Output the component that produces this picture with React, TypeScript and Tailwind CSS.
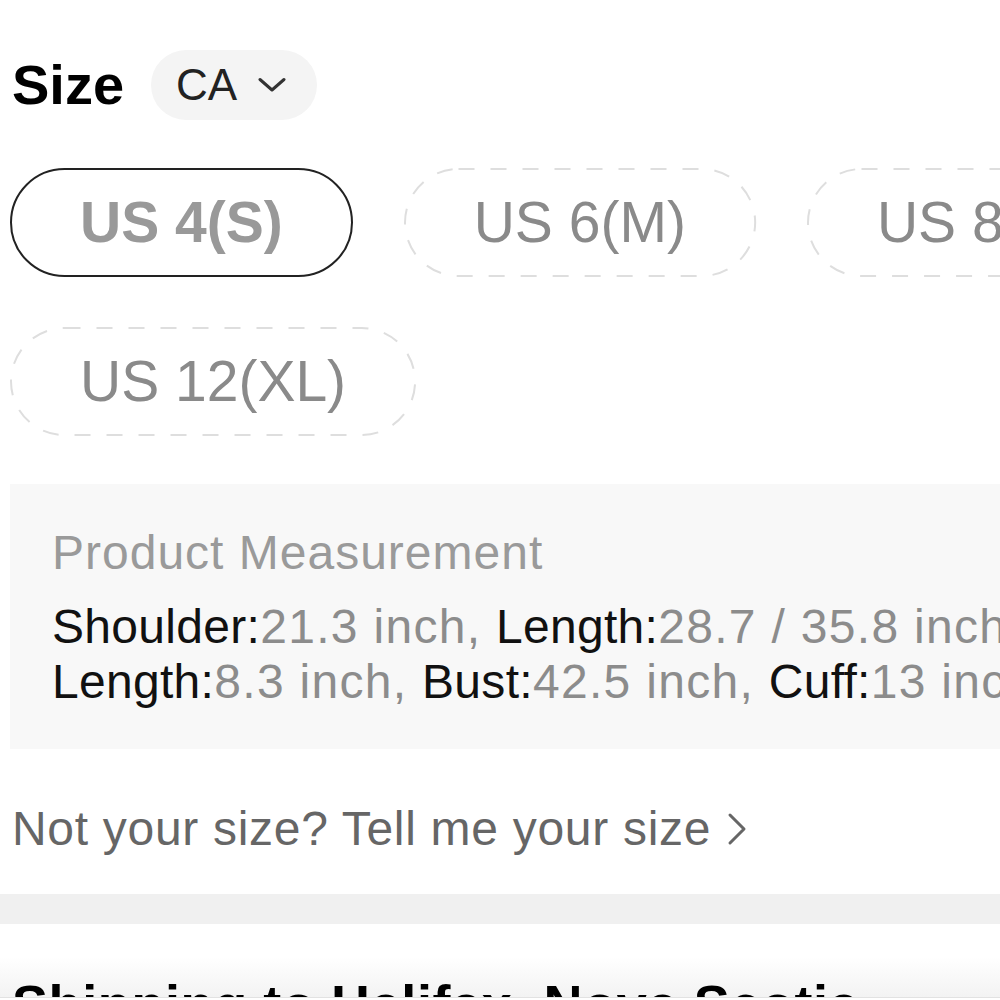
import React from "react";

const sizes = [
  { label: "US 4(S)", selected: true },
  { label: "US 6(M)", selected: false },
  { label: "US 8(L)", selected: false },
  { label: "US 12(XL)", selected: false },
];

const row1: [string, string][] = [
  ["Shoulder:", "21.3 inch, "],
  ["Length:", "28.7 / 35.8 inch, "],
  ["Sleeve", ""],
];

const row2: [string, string][] = [
  ["Length:", "8.3 inch, "],
  ["Bust:", "42.5 inch, "],
  ["Cuff:", "13 inch"],
];

function SizePill({ label, selected }: { label: string; selected: boolean }) {
  if (selected) {
    return (
      <div className="flex h-[109px] items-center rounded-full border-[2.5px] border-[#222] px-[68px] text-[57px] font-bold text-[#999]">
        {label}
      </div>
    );
  }
  return (
    <div className="relative flex h-[109px] items-center rounded-full px-[70px] text-[57px] text-[#8a8a8a]">
      <svg className="absolute inset-0 h-full w-full overflow-visible" aria-hidden>
        <rect
          x="1"
          y="1"
          rx="53.5"
          style={{ width: "calc(100% - 2px)", height: "calc(100% - 2px)" }}
          fill="none"
          stroke="#dedede"
          strokeWidth="2"
          strokeDasharray="16 16"
        />
      </svg>
      <span className="relative">{label}</span>
    </div>
  );
}

function MeasureLine({ parts }: { parts: [string, string][] }) {
  return (
    <div className="whitespace-nowrap leading-[55px]">
      {parts.map(([k, v], i) => (
        <span key={i}>
          <span className="tracking-[0.3px] text-[#111]">{k}</span>
          <span className="tracking-[1.3px] text-[#8c8c8c]">{v}</span>
        </span>
      ))}
    </div>
  );
}

export default function App() {
  return (
    <div
      className="h-[1000px] w-[1000px] overflow-hidden bg-white"
      style={{ fontFamily: '"Liberation Sans", Arial, sans-serif' }}
    >
      <div className="w-[1200px] pl-[10px]">
        {/* size header */}
        <div className="flex items-center gap-[27px] pl-[2px] pt-[50px]">
          <span className="text-[56px] font-bold leading-none text-black">Size</span>
          <button className="flex h-[70px] items-center gap-[21px] rounded-full bg-[#f4f4f4] pl-[25px] pr-[31px]">
            <span className="text-[44px] leading-none text-[#222]">CA</span>
            <svg width="28" height="16" viewBox="0 0 28 16" fill="none">
              <path d="M2 2.5 L14 13 L26 2.5" stroke="#333" strokeWidth="3" strokeLinecap="round" strokeLinejoin="round" />
            </svg>
          </button>
        </div>

        {/* size options */}
        <div className="mt-[48px] flex w-[1180px] flex-wrap gap-x-[51px] gap-y-[50px]">
          {sizes.map((s) => (
            <SizePill key={s.label} label={s.label} selected={s.selected} />
          ))}
        </div>

        {/* measurement */}
        <div className="mt-[48px] w-[1180px] bg-[#f8f8f8] px-[42px] pb-[40px] pt-[41px] text-[48px]">
          <div className="mb-[18px] leading-[56px] tracking-[1px] text-[#9a9a9a]">Product Measurement</div>
          <MeasureLine parts={row1} />
          <MeasureLine parts={row2} />
        </div>

        <div className="mt-[52px] flex items-center gap-[16px] pl-[2px] text-[48px] leading-[56px] tracking-[0.7px] text-[#666]">
          <span>Not your size? Tell me your size</span>
          <svg width="20" height="34" viewBox="0 0 20 34" fill="none">
            <path d="M3 3 L17 17 L3 31" stroke="#666" strokeWidth="3" strokeLinecap="round" strokeLinejoin="round" />
          </svg>
        </div>
      </div>

      <div className="mt-[37px] h-[30px] w-full bg-[#f0f0f0]" />

      {/* shipping section, cut by the sticky bar */}
      <div className="relative h-[73px] overflow-hidden">
        <div className="absolute bottom-0 left-0 h-[40px] w-full bg-gradient-to-b from-white to-[#f3f3f3]" />
        <div className="relative pl-[12px] pt-[50px] text-[54px] font-bold leading-[60px] tracking-[0.6px] text-black">
          Shipping to Halifax, Nova Scotia
        </div>
      </div>
      <div className="h-[5px] border-t border-[#e2e2e2] bg-white" />
    </div>
  );
}
